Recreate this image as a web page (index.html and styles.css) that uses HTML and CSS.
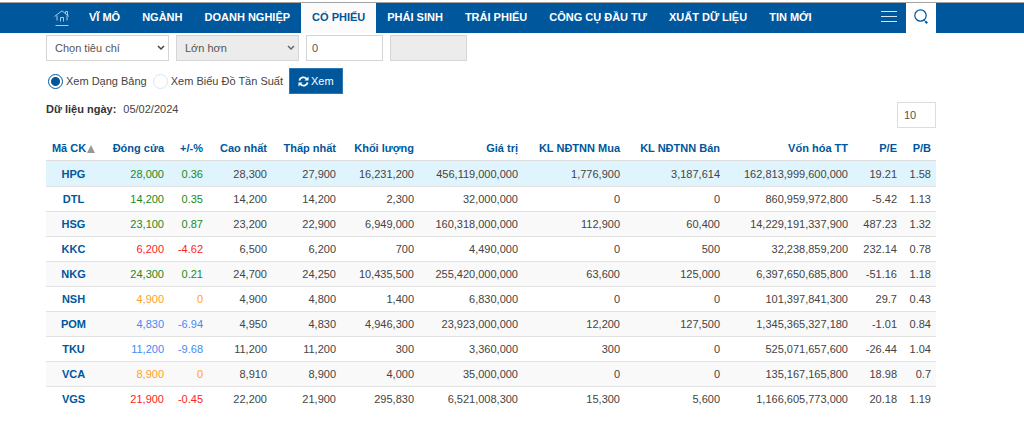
FILE: index.html
```
<!DOCTYPE html>
<html lang="vi">
<head>
<meta charset="utf-8">
<meta name="viewport" content="width=device-width, initial-scale=1">
<title>Cổ phiếu</title>
<link rel="stylesheet" href="styles.css">
</head>
<body>
<header class="topbar">
  <nav class="nav">
    <a class="nav-home" href="#" aria-label="Trang chủ">
      <svg width="16" height="16" viewBox="0 0 16 16" fill="none" stroke="currentColor" stroke-width="1"><path d="M0.500 6.500 8 0.800l7 5.700M11.500 3.500V1.500h2v3.500M3 5.500v5M13 5.500v5M6.500 11.500V7.500h3v4M1.500 15.500h13"/></svg>
    </a>
    <a class="nav-link" href="#">VĨ MÔ</a>
    <a class="nav-link" href="#">NGÀNH</a>
    <a class="nav-link" href="#">DOANH NGHIỆP</a>
    <a class="nav-link nav-link-active" href="#">CỔ PHIẾU</a>
    <a class="nav-link" href="#">PHÁI SINH</a>
    <a class="nav-link" href="#">TRÁI PHIẾU</a>
    <a class="nav-link" href="#">CÔNG CỤ ĐẦU TƯ</a>
    <a class="nav-link" href="#">XUẤT DỮ LIỆU</a>
    <a class="nav-link" href="#">TIN MỚI</a>
    <div class="nav-tools">
      <button class="menu-btn" type="button" aria-label="Menu">
        <svg width="16" height="12" viewBox="0 0 16 12" stroke="currentColor" stroke-width="1"><path d="M0 1.500h16M0 6.500h16M0 11.500h16"/></svg>
      </button>
      <button class="search-btn" type="button" aria-label="Tìm kiếm">
        <svg width="15" height="16" viewBox="0 0 15 16" fill="none" stroke="currentColor"><circle cx="6.500" cy="6.500" r="5.700" stroke-width="1.200"/><path d="M9.500 10.500l1.200 1.300" stroke-width="1"/><path d="M11.200 12.200l2 2" stroke-width="2"/></svg>
      </button>
    </div>
  </nav>
</header>
<main class="page">
  <form class="filters">
    <div class="filter-row">
      <select class="field field-select" aria-label="Tiêu chí"><option>Chọn tiêu chí</option></select>
      <select class="field field-select" aria-label="Điều kiện" disabled><option>Lớn hơn</option></select>
      <input class="field field-number" type="text" value="0" aria-label="Giá trị từ">
      <input class="field field-number" type="text" aria-label="Giá trị đến" disabled>
    </div>
    <div class="view-row">
      <label class="choice"><input type="radio" name="view" checked>Xem Dạng Bảng</label>
      <label class="choice"><input type="radio" name="view">Xem Biểu Đồ Tần Suất</label>
      <button class="view-btn" type="button">
        <svg width="11" height="11" viewBox="0 0 12 12" fill="none" stroke="currentColor" stroke-width="2"><path d="M1.500 5A4.600 4.600 0 0 1 9.400 3M10.500 7A4.600 4.600 0 0 1 2.600 9"/><path d="M11.500 0.500v4.500H7zM0.500 11.500V7H5z" fill="currentColor" stroke="none"/></svg>Xem</button>
    </div>
    <div class="info-row">
      <p class="date"><b>Dữ liệu ngày:</b><span>05/02/2024</span></p>
      <input class="field page-size" type="text" value="10" aria-label="Số dòng">
    </div>
  </form>
  <table class="quotes">
    <colgroup><col class="c-code"><col class="c-close"><col class="c-change"><col class="c-high"><col class="c-low"><col class="c-volume"><col class="c-value"><col class="c-buy"><col class="c-sell"><col class="c-cap"><col class="c-pe"><col class="c-pb"></colgroup>
    <thead>
      <tr><th><span class="sorted">Mã CK<svg width="8" height="8" viewBox="0 0 8 8"><path d="M4 0l4 8H0z" fill="#999"/></svg></span></th><th>Đóng cửa</th><th>+/-%</th><th>Cao nhất</th><th>Thấp nhất</th><th>Khối lượng</th><th>Giá trị</th><th>KL NĐTNN Mua</th><th>KL NĐTNN Bán</th><th>Vốn hóa TT</th><th>P/E</th><th>P/B</th></tr>
    </thead>
    <tbody>
      <tr class="up current"><td><a href="#">HPG</a></td><td>28,000</td><td>0.36</td><td>28,300</td><td>27,900</td><td>16,231,200</td><td>456,119,000,000</td><td>1,776,900</td><td>3,187,614</td><td>162,813,999,600,000</td><td>19.21</td><td>1.58</td></tr>
      <tr class="up"><td><a href="#">DTL</a></td><td>14,200</td><td>0.35</td><td>14,200</td><td>14,200</td><td>2,300</td><td>32,000,000</td><td>0</td><td>0</td><td>860,959,972,800</td><td>-5.42</td><td>1.13</td></tr>
      <tr class="up"><td><a href="#">HSG</a></td><td>23,100</td><td>0.87</td><td>23,200</td><td>22,900</td><td>6,949,000</td><td>160,318,000,000</td><td>112,900</td><td>60,400</td><td>14,229,191,337,900</td><td>487.23</td><td>1.32</td></tr>
      <tr class="down"><td><a href="#">KKC</a></td><td>6,200</td><td>-4.62</td><td>6,500</td><td>6,200</td><td>700</td><td>4,490,000</td><td>0</td><td>500</td><td>32,238,859,200</td><td>232.14</td><td>0.78</td></tr>
      <tr class="up"><td><a href="#">NKG</a></td><td>24,300</td><td>0.21</td><td>24,700</td><td>24,250</td><td>10,435,500</td><td>255,420,000,000</td><td>63,600</td><td>125,000</td><td>6,397,650,685,800</td><td>-51.16</td><td>1.18</td></tr>
      <tr class="flat"><td><a href="#">NSH</a></td><td>4,900</td><td>0</td><td>4,900</td><td>4,800</td><td>1,400</td><td>6,830,000</td><td>0</td><td>0</td><td>101,397,841,300</td><td>29.7</td><td>0.43</td></tr>
      <tr class="floor"><td><a href="#">POM</a></td><td>4,830</td><td>-6.94</td><td>4,950</td><td>4,830</td><td>4,946,300</td><td>23,923,000,000</td><td>12,200</td><td>127,500</td><td>1,345,365,327,180</td><td>-1.01</td><td>0.84</td></tr>
      <tr class="floor"><td><a href="#">TKU</a></td><td>11,200</td><td>-9.68</td><td>11,200</td><td>11,200</td><td>300</td><td>3,360,000</td><td>300</td><td>0</td><td>525,071,657,600</td><td>-26.44</td><td>1.04</td></tr>
      <tr class="flat"><td><a href="#">VCA</a></td><td>8,900</td><td>0</td><td>8,910</td><td>8,900</td><td>4,000</td><td>35,000,000</td><td>0</td><td>0</td><td>135,167,165,800</td><td>18.98</td><td>0.7</td></tr>
      <tr class="down"><td><a href="#">VGS</a></td><td>21,900</td><td>-0.45</td><td>22,200</td><td>21,900</td><td>295,830</td><td>6,521,008,300</td><td>15,300</td><td>5,600</td><td>1,166,605,773,000</td><td>20.18</td><td>1.19</td></tr>
    </tbody>
  </table>
</main>
</body>
</html>
```
FILE: styles.css
```
* { box-sizing: border-box; }
body {
  margin: 0;
  background: #fff;
  color: #444;
  font: 11px/16px "Liberation Sans", Arial, sans-serif;
}
button, input, select { font: inherit; color: inherit; }
a { text-decoration: none; }

.topbar {
  margin-top: 2px;
  padding: 0 88px 0 46px;
  border-top: 1px solid #a3a3a3;
  background: #00579c;
}
.nav { display: flex; height: 30px; }
.nav-home { display: flex; align-items: center; padding: 0 8px; color: #a9cbe6; }
.nav-link {
  padding: 6px 11px 0;
  color: #fff;
  font-weight: bold;
  white-space: nowrap;
}
.nav-link-active { background: #fbfbfb; color: #00579c; }
.nav-tools { display: flex; margin-left: auto; }
.nav-tools button { display: flex; align-items: center; justify-content: center; border: 0; padding: 0; }
.nav-tools .menu-btn { padding: 0 9px 4px; background: none; color: #d5e5f2; }
.nav-tools .search-btn { width: 30px; padding-bottom: 2px; background: #fff; color: #00579c; }

.page { padding: 2px 88px 24px 46px; }
.filter-row { display: flex; gap: 7px; }
.field {
  height: 26px;
  padding: 0 8px;
  border: 1px solid #d5d5d5;
  border-radius: 0;
  background: #fff;
  color: #555;
}
.field:disabled { background: #ececec; color: #555; opacity: 1; }
.field-select {
  width: 123px;
  appearance: none;
  background: #fff url("data:image/svg+xml,%3Csvg xmlns='http://www.w3.org/2000/svg' width='8' height='6'%3E%3Cpath d='M1 1l3 3 3-3' fill='none' stroke='%23444' stroke-width='1.500'/%3E%3C/svg%3E") no-repeat right 3px center;
}
.field-select:disabled {
  background: #ececec url("data:image/svg+xml,%3Csvg xmlns='http://www.w3.org/2000/svg' width='8' height='6'%3E%3Cpath d='M1 1l3 3 3-3' fill='none' stroke='%23666' stroke-width='1.500'/%3E%3C/svg%3E") no-repeat right 3px center;
}
.field-number { width: 77px; padding: 0 5px; }

.view-row { display: flex; align-items: center; gap: 6px; margin-top: 7px; padding-left: 2px; }
.choice { display: flex; align-items: center; gap: 3px; white-space: nowrap; }
.choice input {
  appearance: none;
  width: 15px;
  height: 15px;
  margin: 0;
  border: 1px solid #d9e6ea;
  border-radius: 50%;
}
.choice input:checked { border-color: #00579c; background: radial-gradient(circle, #00579c 4px, #fff 5px); }
.view-btn {
  display: flex;
  align-items: center;
  gap: 2px;
  height: 26px;
  padding: 0 8px;
  border: 1px solid #2f77b0;
  background: #00579c;
  color: #fff;
}

.info-row { display: flex; justify-content: space-between; align-items: flex-start; margin-top: 7px; }
.date { display: flex; gap: 7px; margin: 0; }
.date b { color: #333; }
.page-size { width: 39px; margin-top: 1px; padding: 0 6px; border-color: #ddd; }

.quotes { width: 100%; table-layout: fixed; border-collapse: separate; border-spacing: 0; }
.c-code { width: 55px; }
.c-close { width: 68px; }
.c-change { width: 39px; }
.c-high { width: 64px; }
.c-low { width: 69px; }
.c-volume { width: 78px; }
.c-value { width: 104px; }
.c-buy { width: 102px; }
.c-sell { width: 100px; }
.c-cap { width: 128px; }
.c-pe { width: 49px; }
.c-pb { width: 34px; }
.quotes th, .quotes td {
  padding: 4px 5px 4px 0;
  border-bottom: 1px solid #e2e2e2;
  text-align: right;
  white-space: nowrap;
}
.quotes th { padding-top: 12px; padding-bottom: 4px; color: #00579c; }
.quotes tr > :first-child { padding-right: 0; text-align: center; }
.quotes tr:last-child td { border-bottom: 0; }
.quotes thead th { border-bottom: 1px solid #ddd; }
.quotes tbody tr:nth-child(odd) { background: #f9f9f9; }
.quotes tbody tr.current { background: #e0f4fd; }
.quotes .current td { padding-top: 5px; }
.quotes a { color: #00579c; font-weight: bold; }
.sorted svg { vertical-align: -1px; margin-left: 1px; }
.up td:nth-child(2), .up td:nth-child(3) { color: #1b8a1b; }
.down td:nth-child(2), .down td:nth-child(3) { color: #f22; }
.flat td:nth-child(2), .flat td:nth-child(3) { color: #ff9f2a; }
.floor td:nth-child(2), .floor td:nth-child(3) { color: #4489f5; }
```
